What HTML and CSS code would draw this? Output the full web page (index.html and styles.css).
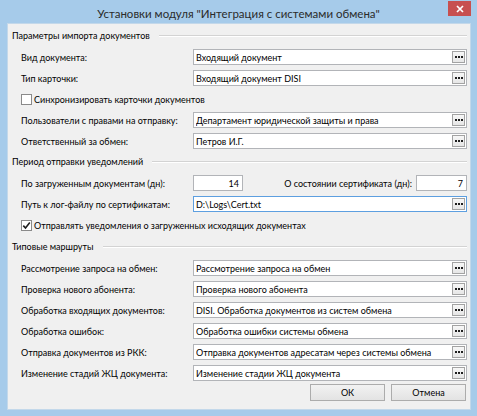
FILE: index.html
```html
<!DOCTYPE html>
<html lang="ru">
<head>
<meta charset="utf-8">
<title>Установки модуля</title>
<link rel="stylesheet" href="styles.css">
</head>
<body>
<div class="window">
  <div class="titlebar">
    <div class="title">Установки модуля "Интеграция с системами обмена"</div>
    <div class="close"><svg width="8" height="8" viewBox="0 0 8 8"><path d="M1 1L7 7M7 1L1 7" stroke="#fff" stroke-width="1.7" fill="none"/></svg></div>
  </div>
  <div class="client">
    <section class="group">
      <div class="group-header"><span>Параметры импорта документов</span><span class="rule"></span></div>
      <div class="rows">
        <div class="row"><span class="label">Вид документа:</span><div class="field"><span class="value">Входящий документ</span><span class="ell"></span></div></div>
        <div class="row"><span class="label">Тип карточки:</span><div class="field"><span class="value">Входящий документ DISI</span><span class="ell"></span></div></div>
        <div class="row check-row"><span class="box"></span><span>Синхронизировать карточки документов</span></div>
        <div class="row"><span class="label">Пользователи с правами на отправку:</span><div class="field"><span class="value">Департамент юридической защиты и права</span><span class="ell"></span></div></div>
        <div class="row"><span class="label">Ответственный за обмен:</span><div class="field"><span class="value">Петров И.Г.</span><span class="ell"></span></div></div>
      </div>
    </section>
    <section class="group group-2">
      <div class="group-header"><span>Период отправки уведомлений</span><span class="rule"></span></div>
      <div class="rows">
        <div class="row"><span class="label">По загруженным документам (дн):</span><div class="field num">14</div><span class="label-right">О состоянии сертификата (дн):</span><div class="field num num-2">7</div></div>
        <div class="row"><span class="label">Путь к лог-файлу по сертификатам:</span><div class="field focused"><span class="value">D:\Logs\Cert.txt</span><span class="ell"></span></div></div>
        <div class="row check-row"><span class="box checked"><svg width="9" height="9" viewBox="0 0 9 9"><path d="M1.3 4.6L3.5 7L7.8 1.6" stroke="#1e1e1e" stroke-width="1.6" fill="none"/></svg></span><span>Отправлять уведомления о загруженных исходящих документах</span></div>
      </div>
    </section>
    <section class="group group-3">
      <div class="group-header"><span>Типовые маршруты</span><span class="rule"></span></div>
      <div class="rows">
        <div class="row"><span class="label">Рассмотрение запроса на обмен:</span><div class="field"><span class="value">Рассмотрение запроса на обмен</span><span class="ell"></span></div></div>
        <div class="row"><span class="label">Проверка нового абонента:</span><div class="field"><span class="value">Проверка нового абонента</span><span class="ell"></span></div></div>
        <div class="row"><span class="label">Обработка входящих документов:</span><div class="field"><span class="value">DISI. Обработка документов из систем обмена</span><span class="ell"></span></div></div>
        <div class="row"><span class="label">Обработка ошибок:</span><div class="field"><span class="value">Обработка ошибки системы обмена</span><span class="ell"></span></div></div>
        <div class="row"><span class="label">Отправка документов из РКК:</span><div class="field"><span class="value">Отправка документов адресатам через системы обмена</span><span class="ell"></span></div></div>
        <div class="row"><span class="label">Изменение стадий ЖЦ документа:</span><div class="field"><span class="value">Изменение стадии ЖЦ документа</span><span class="ell"></span></div></div>
      </div>
    </section>
    <div class="buttons">
      <div class="btn">ОК</div>
      <div class="btn">Отмена</div>
    </div>
  </div>
</div>
</body>
</html>
```
FILE: styles.css
```css
html, body {
  margin: 0;
  padding: 0;
}
body {
  font-family: Lato, "Open Sans", sans-serif;
  font-size: 9px;
  color: #000;
}
.window {
  width: 477px;
  height: 416px;
  background: #a6cbea;
  display: flex;
  flex-direction: column;
  box-sizing: border-box;
}
.titlebar {
  height: 23px;
  flex: none;
  display: grid;
  grid-template-columns: 1fr auto 1fr;
}
.title {
  grid-column: 2;
  font-size: 11.5px;
  line-height: 23px;
  padding-top: 2px;
  color: #2b2b2b;
  white-space: nowrap;
}
.close {
  grid-column: 3;
  justify-self: end;
  width: 23px;
  height: 15px;
  margin: 1px 6px 0 0;
  background: #c75050;
  display: flex;
  align-items: center;
  justify-content: center;
}
.close svg {
  display: block;
}
.client {
  flex: 1;
  margin: 0 6px 6px 7px;
  background: #f0f0f0;
  border: 1px solid #c3d8ea;
  padding: 5px 3px 0 4px;
  display: flex;
  flex-direction: column;
}
.group-2 {
  margin-top: 6px;
}
.group-3 {
  margin-top: 7px;
}
.group-header {
  height: 14px;
  line-height: 14px;
  display: flex;
  align-items: center;
  margin-bottom: 6px;
  white-space: nowrap;
}
.rule {
  flex: 1;
  margin-left: 9px;
  height: 0;
  border-top: 1px solid #d3d3d3;
  border-bottom: 1px solid #fff;
}
.rows {
  display: flex;
  flex-direction: column;
  gap: 5px;
  padding-left: 9px;
}
.row {
  height: 16px;
  display: flex;
  align-items: center;
  white-space: nowrap;
}
.label {
  width: 172px;
  flex: none;
}
.field {
  flex: 1;
  height: 16px;
  box-sizing: border-box;
  border: 1px solid #b2b4b8;
  background: #fff;
  display: flex;
  align-items: center;
  padding-left: 2px;
  min-width: 0;
}
.field.focused {
  border-color: #5d9fe0;
}
.value {
  flex: 1;
  overflow: hidden;
}
.ell {
  flex: none;
  width: 13px;
  height: 12px;
  box-sizing: border-box;
  margin-right: 1px;
  border: 1px solid #a3a3a3;
  background: linear-gradient(#f7f7f7, #e6e6e6);
  display: flex;
  align-items: center;
  justify-content: center;
}
.ell::after {
  content: "";
  width: 2px;
  height: 2px;
  margin-right: 6px;
  background: #1f1f1f;
  box-shadow: 3px 0 0 #1f1f1f, 6px 0 0 #1f1f1f;
}
.field.num {
  flex: none;
  width: 50px;
  justify-content: flex-end;
  padding: 0 3px 0 0;
}
.field.num-2 {
  width: 51px;
}
.label-right {
  flex: 1;
  text-align: right;
  padding-right: 4px;
}
.check-row {
  gap: 2px;
}
.box {
  width: 11px;
  height: 11px;
  box-sizing: border-box;
  border: 1px solid #8a8a8a;
  background: #fff;
  flex: none;
  display: flex;
  align-items: center;
  justify-content: center;
}
.box svg {
  display: block;
}
.buttons {
  margin-top: 3px;
  display: flex;
  justify-content: flex-end;
  gap: 6px;
  padding-right: 1px;
}
.btn {
  width: 75px;
  height: 17px;
  box-sizing: border-box;
  border: 1px solid #acacac;
  background: linear-gradient(#f2f2f2, #e3e3e3);
  display: flex;
  align-items: center;
  justify-content: center;
}
```
